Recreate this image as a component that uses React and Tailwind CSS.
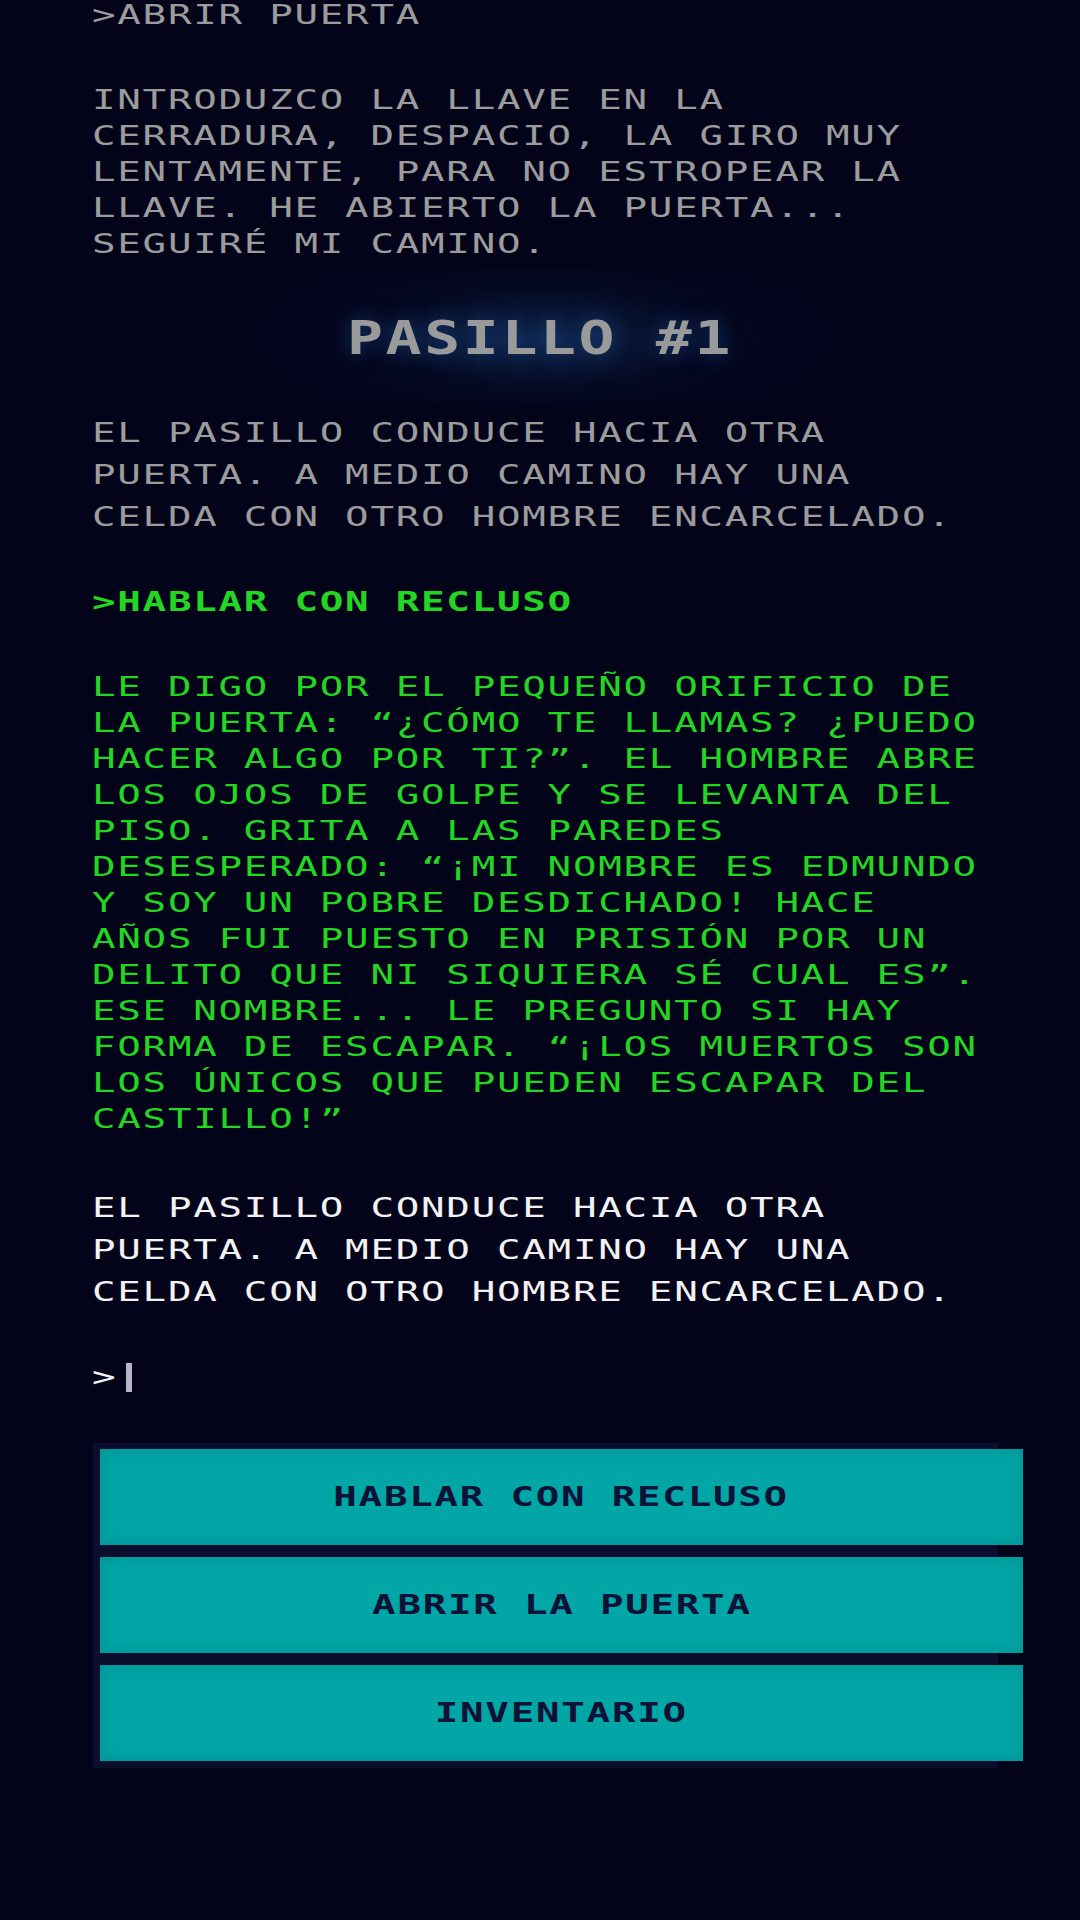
import React from "react";

const previous = [
  "INTRODUZCO LA LLAVE EN LA",
  "CERRADURA, DESPACIO, LA GIRO MUY",
  "LENTAMENTE, PARA NO ESTROPEAR LA",
  "LLAVE. HE ABIERTO LA PUERTA...",
  "SEGUIRÉ MI CAMINO.",
];

const room = [
  "EL PASILLO CONDUCE HACIA OTRA",
  "PUERTA. A MEDIO CAMINO HAY UNA",
  "CELDA CON OTRO HOMBRE ENCARCELADO.",
];

const answer = [
  "LE DIGO POR EL PEQUEÑO ORIFICIO DE",
  "LA PUERTA: “¿CÓMO TE LLAMAS? ¿PUEDO",
  "HACER ALGO POR TI?”. EL HOMBRE ABRE",
  "LOS OJOS DE GOLPE Y SE LEVANTA DEL",
  "PISO. GRITA A LAS PAREDES",
  "DESESPERADO: “¡MI NOMBRE ES EDMUNDO",
  "Y SOY UN POBRE DESDICHADO! HACE",
  "AÑOS FUI PUESTO EN PRISIÓN POR UN",
  "DELITO QUE NI SIQUIERA SÉ CUAL ES”.",
  "ESE NOMBRE... LE PREGUNTO SI HAY",
  "FORMA DE ESCAPAR. “¡LOS MUERTOS SON",
  "LOS ÚNICOS QUE PUEDEN ESCAPAR DEL",
  "CASTILLO!”",
];

const actions = ["HABLAR CON RECLUSO", "ABRIR LA PUERTA", "INVENTARIO"];

// the terminal font is wide, so the mono glyphs are stretched sideways
const Lines = ({ lines, className }) => (
  <div className={className}>
    {lines.map((line, i) => (
      <div key={i} className="origin-left scale-x-[1.45] whitespace-pre">
        {line}
      </div>
    ))}
  </div>
);

const App = () => {
  return (
    <div className="min-h-screen w-full overflow-hidden bg-[#03031a] font-['DejaVu_Sans_Mono',monospace] text-[27px] tracking-[1.2px]">
      <div className="px-[92px]">
        <Lines lines={[">ABRIR PUERTA"]} className="mt-[-3px] leading-[36px] text-[#9c9c9c]" />

        <Lines lines={previous} className="mt-[49px] leading-[36px] text-[#9c9c9c]" />

        <div className="mt-[8px] -mx-[92px] py-[40px] bg-[radial-gradient(ellipse_300px_95px_at_center,rgba(20,58,106,0.6),rgba(10,25,55,0.25)_55%,transparent)]">
          <h1 className="scale-x-[1.3] text-center text-[46px] font-bold leading-[56px] tracking-[2px] text-[#9a9a9a] [text-shadow:0_0_18px_rgba(40,100,180,0.5)]">
            PASILLO #1
          </h1>
        </div>

        <Lines lines={room} className="mt-[6px] leading-[42px] text-[#9c9c9c]" />

        <Lines lines={[">HABLAR CON RECLUSO"]} className="mt-[46px] font-bold leading-[36px] text-[#22d622]" />

        <Lines lines={answer} className="mt-[49px] leading-[36px] text-[#22d622]" />

        <Lines lines={room} className="mt-[50px] leading-[42px] text-[#f2f2f2]" />

        <div className="mt-[46px] flex h-[36px] items-start leading-[36px] text-[#f2f2f2]">
          <span className="inline-block origin-left scale-x-[1.45]">&gt;</span>
          <span className="ml-[17px] mt-[4px] inline-block h-[29px] w-[6px] bg-[#b6b6c6]" />
        </div>

        <div className="mt-[48px] ml-[1px] flex w-[905px] flex-col gap-[12px] bg-[#0c0e2e] pt-[6px] pb-[7px]">
          {actions.map((label) => (
            <button
              key={label}
              type="button"
              className="ml-[7px] flex h-[96px] w-[923px] items-center justify-center bg-[#02a6a6] font-bold text-[#0b1236] shadow-[inset_0_0_18px_rgba(0,120,130,0.45)]"
            >
              <span className="inline-block scale-x-[1.45]">{label}</span>
            </button>
          ))}
        </div>
      </div>
    </div>
  );
};

export default App;
